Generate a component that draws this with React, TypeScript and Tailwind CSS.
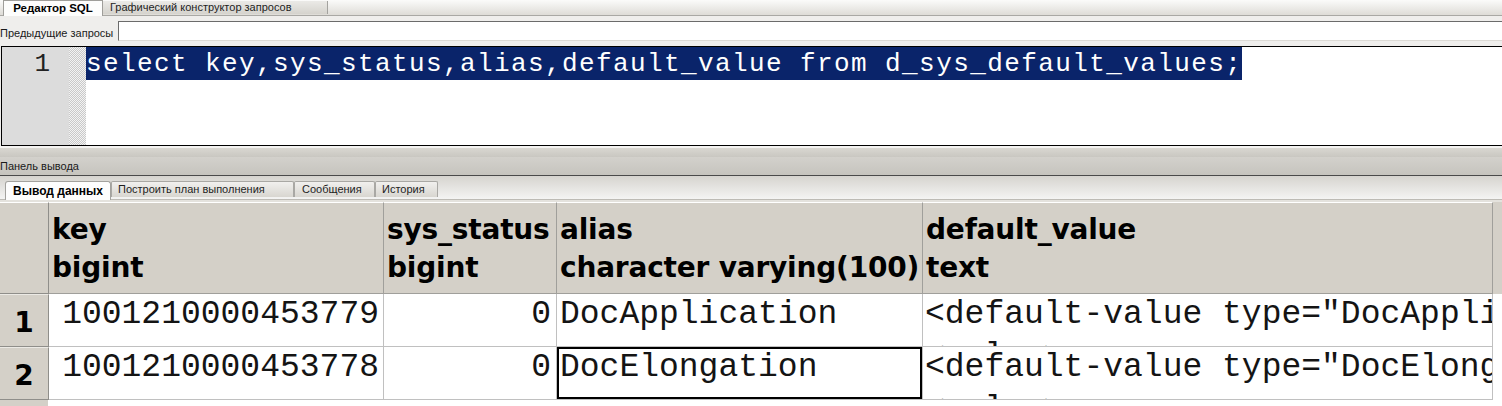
import React from "react";

const sql = "select key,sys_status,alias,default_value from d_sys_default_values;";

const rows = [
  {
    n: "1",
    key: "1001210000453779",
    status: "0",
    alias: "DocApplication",
    value: '<default-value type="DocApplication">\n<value>',
  },
  {
    n: "2",
    key: "1001210000453778",
    status: "0",
    alias: "DocElongation",
    value: '<default-value type="DocElongation">\n<value>',
    selected: true,
  },
];

function HeaderCell({ w, name, type }: { w: string; name: string; type: string }) {
  return (
    <div
      className={`${w} shrink-0 overflow-hidden whitespace-nowrap border-r border-b border-[#a09f9b] border-t border-t-white bg-[#d4d0c8] pl-[3px] pt-[8px] font-['DejaVu_Sans',sans-serif] text-[28px] font-bold leading-[38px] tracking-[-0.2px]`}
    >
      <div>{name}</div>
      <div>{type}</div>
    </div>
  );
}

export default function App() {
  return (
    <div className="h-[406px] w-[1502px] overflow-hidden bg-[#efeeec] font-['Liberation_Sans',sans-serif] text-[11px] text-black">
      {/* верхние вкладки */}
      <div className="flex h-[16px] border-b border-[#a9a8a4] bg-linear-to-b from-[#fbfbfa] to-[#dedcd7]">
        <div className="-mb-px ml-[3px] flex h-[16px] w-[100px] items-center justify-center border-x border-t border-[#9f9e9a] bg-[#fdfdfc] text-[11.5px] font-bold">
          Редактор SQL
        </div>
        <div className="mt-[1px] flex h-[13px] w-[225px] items-center border-r border-[#a3a29e] bg-linear-to-b from-[#ebeae7] to-[#d5d3cd] pl-[7px] text-[#1e1e1e]">
          Графический конструктор запросов
        </div>
      </div>

      {/* предыдущие запросы */}
      <div className="flex h-[30px] items-center gap-[5px]">
        <span className="pt-[4px] text-[#1a1a1a]">Предыдущие запросы</span>
        <div className="h-[20px] flex-1 border-y border-l border-t-[#6b6b6b] border-l-[#6b6b6b] border-b-[#dcdad5] bg-white" />
      </div>

      {/* редактор */}
      <div className="ml-[1px] flex h-[100px] border-y border-l border-black bg-white">
        <div className="w-[67px] shrink-0 bg-[#dcdcdc] pr-[19px] text-right font-['Liberation_Mono',monospace] text-[26px] leading-[35px] text-[#222]">
          1
        </div>
        <div className="w-[17px] shrink-0 bg-[repeating-conic-gradient(#c9c9c9_0%_25%,#f3f3f3_0%_50%)] bg-[length:2px_2px]" />
        <div className="flex-1 whitespace-pre">
          <span className="inline-block h-[33px] bg-[#0a246a] font-['Liberation_Mono',monospace] text-[26px] leading-[35px] tracking-[1.4px] text-white">
            {sql}
          </span>
        </div>
      </div>

      {/* разделитель */}
      <div className="h-[11px] border-t-2 border-[#f4f3f1] bg-linear-to-b from-[#d9d7d1] to-[#c9c7c1]" />

      {/* панель вывода */}
      <div className="flex h-[18px] items-center bg-linear-to-b from-[#d3d1cc] to-[#c6c4be] text-[#1a1a1a]">
        Панель вывода
      </div>
      <div className="h-[1px] bg-[#4a4a4a]" />

      {/* вкладки вывода */}
      <div className="flex h-[24px] items-end border-b border-[#bdbbb5] bg-linear-to-b from-[#d6d4cf] to-[#f4f4f3] pl-[5px]">
        <div className="-mb-px flex h-[19px] w-[106px] items-center justify-center rounded-t-[3px] border-x border-t border-[#a3a29e] bg-[#fdfdfd] text-[12px] font-bold">
          Вывод данных
        </div>
        <div className="mb-[2px] flex h-[16px] w-[183px] items-center rounded-t-[2px] border border-b-0 border-[#a9a8a4] bg-linear-to-b from-[#f1f0ee] to-[#d8d6d0] pl-[6px] text-[#1e1e1e]">
          Построить план выполнения
        </div>
        <div className="mb-[2px] flex h-[16px] w-[81px] items-center rounded-t-[2px] border border-b-0 border-[#a9a8a4] bg-linear-to-b from-[#f1f0ee] to-[#d8d6d0] pl-[7px] text-[#1e1e1e]">
          Сообщения
        </div>
        <div className="mb-[2px] flex h-[16px] w-[63px] items-center rounded-t-[2px] border border-b-0 border-[#a9a8a4] bg-linear-to-b from-[#f1f0ee] to-[#d8d6d0] pl-[6px] text-[#1e1e1e]">
          История
        </div>
      </div>
      <div className="h-[2px] bg-[#e4e2dd]" />

      {/* таблица */}
      <div className="bg-white">
        <div className="flex h-[92px]">
          <div className="w-[49px] shrink-0 border-r border-b border-[#8f8e8a] border-t border-t-white bg-[#d4d0c8]" />
          <HeaderCell w="w-[335px]" name="key" type="bigint" />
          <HeaderCell w="w-[173px]" name="sys_status" type="bigint" />
          <HeaderCell w="w-[366px]" name="alias" type="character varying(100)" />
          <HeaderCell w="w-[570px]" name="default_value" type="text" />
          <div className="flex-1 bg-[#d4d0c8]" />
        </div>

        {rows.map((r) => (
          <div key={r.n} className="flex h-[53px] font-['Liberation_Mono',monospace] text-[33px] leading-[42px] text-[#141414]">
            <div className="flex w-[49px] shrink-0 items-center justify-center border-r border-b border-[#8f8e8a] border-t border-t-[#eceae5] bg-[#d4d0c8] pt-[3px] font-['DejaVu_Sans',sans-serif] text-[28px] font-bold leading-[33px] text-black">
              {r.n}
            </div>
            <div className="w-[335px] shrink-0 overflow-hidden whitespace-pre border-r border-b border-[#c0c0c0] pr-[4px] text-right">
              {r.key}
            </div>
            <div className="w-[173px] shrink-0 overflow-hidden whitespace-pre border-r border-b border-[#c0c0c0] pr-[5px] text-right">
              {r.status}
            </div>
            <div
              className={`w-[366px] shrink-0 overflow-hidden whitespace-pre border-r border-b border-[#c0c0c0] pl-[3px] ${
                r.selected ? "shadow-[inset_0_0_0_2px_#000]" : ""
              }`}
            >
              {r.alias}
            </div>
            <div className="w-[570px] shrink-0 overflow-hidden whitespace-pre border-r border-b border-[#c0c0c0] pl-[2px]">
              {r.value}
            </div>
            <div className="flex-1" />
          </div>
        ))}

        <div className="flex h-[12px]">
          <div className="w-[48px] shrink-0 bg-[#d4d0c8]" />
        </div>
      </div>
    </div>
  );
}
